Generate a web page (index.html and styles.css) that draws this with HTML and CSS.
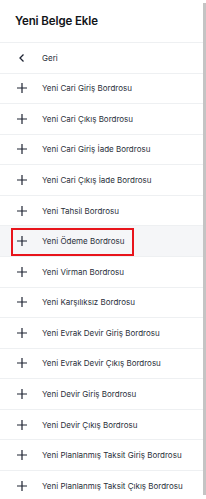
FILE: index.html
```html
<!DOCTYPE html>
<html lang="tr">
<head>
<meta charset="utf-8">
<link rel="stylesheet" href="styles.css">
</head>
<body>
<div class="frame">
  <div class="panel">
    <div class="header">Yeni Belge Ekle</div>
    <ul class="list">
      <li class="row"><span class="ico"><svg viewBox="0 0 10 10" width="10" height="10"><path d="M6.5 1.5 L3 5 L6.5 8.5" fill="none" stroke="#1e2433" stroke-width="1.3"/></svg></span><span class="label">Geri</span></li>
      <li class="row"><span class="ico"><svg viewBox="0 0 10 10" width="10" height="10"><path d="M5 0 V10 M0 5 H10" stroke="#1e2433" stroke-width="1.2"/></svg></span><span class="label">Yeni Cari Giriş Bordrosu</span></li>
      <li class="row"><span class="ico"><svg viewBox="0 0 10 10" width="10" height="10"><path d="M5 0 V10 M0 5 H10" stroke="#1e2433" stroke-width="1.2"/></svg></span><span class="label">Yeni Cari Çıkış Bordrosu</span></li>
      <li class="row"><span class="ico"><svg viewBox="0 0 10 10" width="10" height="10"><path d="M5 0 V10 M0 5 H10" stroke="#1e2433" stroke-width="1.2"/></svg></span><span class="label">Yeni Cari Giriş İade Bordrosu</span></li>
      <li class="row"><span class="ico"><svg viewBox="0 0 10 10" width="10" height="10"><path d="M5 0 V10 M0 5 H10" stroke="#1e2433" stroke-width="1.2"/></svg></span><span class="label">Yeni Cari Çıkış İade Bordrosu</span></li>
      <li class="row"><span class="ico"><svg viewBox="0 0 10 10" width="10" height="10"><path d="M5 0 V10 M0 5 H10" stroke="#1e2433" stroke-width="1.2"/></svg></span><span class="label">Yeni Tahsil Bordrosu</span></li>
      <li class="row active"><span class="ico"><svg viewBox="0 0 10 10" width="10" height="10"><path d="M5 0 V10 M0 5 H10" stroke="#1e2433" stroke-width="1.2"/></svg></span><span class="label">Yeni Ödeme Bordrosu</span><span class="mark"></span></li>
      <li class="row"><span class="ico"><svg viewBox="0 0 10 10" width="10" height="10"><path d="M5 0 V10 M0 5 H10" stroke="#1e2433" stroke-width="1.2"/></svg></span><span class="label">Yeni Virman Bordrosu</span></li>
      <li class="row"><span class="ico"><svg viewBox="0 0 10 10" width="10" height="10"><path d="M5 0 V10 M0 5 H10" stroke="#1e2433" stroke-width="1.2"/></svg></span><span class="label">Yeni Karşılıksız Bordrosu</span></li>
      <li class="row"><span class="ico"><svg viewBox="0 0 10 10" width="10" height="10"><path d="M5 0 V10 M0 5 H10" stroke="#1e2433" stroke-width="1.2"/></svg></span><span class="label">Yeni Evrak Devir Giriş Bordrosu</span></li>
      <li class="row"><span class="ico"><svg viewBox="0 0 10 10" width="10" height="10"><path d="M5 0 V10 M0 5 H10" stroke="#1e2433" stroke-width="1.2"/></svg></span><span class="label">Yeni Evrak Devir Çıkış Bordrosu</span></li>
      <li class="row"><span class="ico"><svg viewBox="0 0 10 10" width="10" height="10"><path d="M5 0 V10 M0 5 H10" stroke="#1e2433" stroke-width="1.2"/></svg></span><span class="label">Yeni Devir Giriş Bordrosu</span></li>
      <li class="row"><span class="ico"><svg viewBox="0 0 10 10" width="10" height="10"><path d="M5 0 V10 M0 5 H10" stroke="#1e2433" stroke-width="1.2"/></svg></span><span class="label">Yeni Devir Çıkış Bordrosu</span></li>
      <li class="row"><span class="ico"><svg viewBox="0 0 10 10" width="10" height="10"><path d="M5 0 V10 M0 5 H10" stroke="#1e2433" stroke-width="1.2"/></svg></span><span class="label">Yeni Planlanmış Taksit Giriş Bordrosu</span></li>
      <li class="row"><span class="ico"><svg viewBox="0 0 10 10" width="10" height="10"><path d="M5 0 V10 M0 5 H10" stroke="#1e2433" stroke-width="1.2"/></svg></span><span class="label">Yeni Planlanmış Taksit Çıkış Bordrosu</span></li>
    </ul>
  </div>
  <div class="track"><div class="thumb"></div></div>
</div>
</body>
</html>
```
FILE: styles.css
```css
* { box-sizing: border-box; }
html, body { margin: 0; padding: 0; background: #fff; }
body { width: 206px; height: 499px; overflow: hidden; font-family: Inter, "Noto Sans", sans-serif; color: #2a2f3a; }
.frame { display: flex; height: 499px; }
.panel { width: 203px; flex: none; background: #fff; }
.header {
  height: 43px;
  padding-left: 15px;
  display: flex;
  align-items: center;
  font-size: 11.5px;
  font-weight: 600;
  color: #111418;
  border-bottom: 1px solid #eef0f2;
  letter-spacing: -0.1px;
}
.list { list-style: none; margin: 0; padding: 0; }
.row {
  position: relative;
  height: 30.57px;
  display: flex;
  align-items: center;
  border-bottom: 1px solid #eef0f2;
  font-size: 8px;
  color: #2a2f3a;
}
.ico { width: 42px; padding-left: 17px; display: flex; align-items: center; flex: none; }
.ico svg { display: block; }
.active { background: #f5f6f8; }
.mark {
  position: absolute;
  left: 11px;
  top: 2px;
  width: 123px;
  height: 28px;
  border: 2px solid #e8141b;
}
.track { width: 3px; flex: none; padding: 3px 0 4px; }
.thumb { width: 3px; height: 100%; background: #c4c4c4; }
```
